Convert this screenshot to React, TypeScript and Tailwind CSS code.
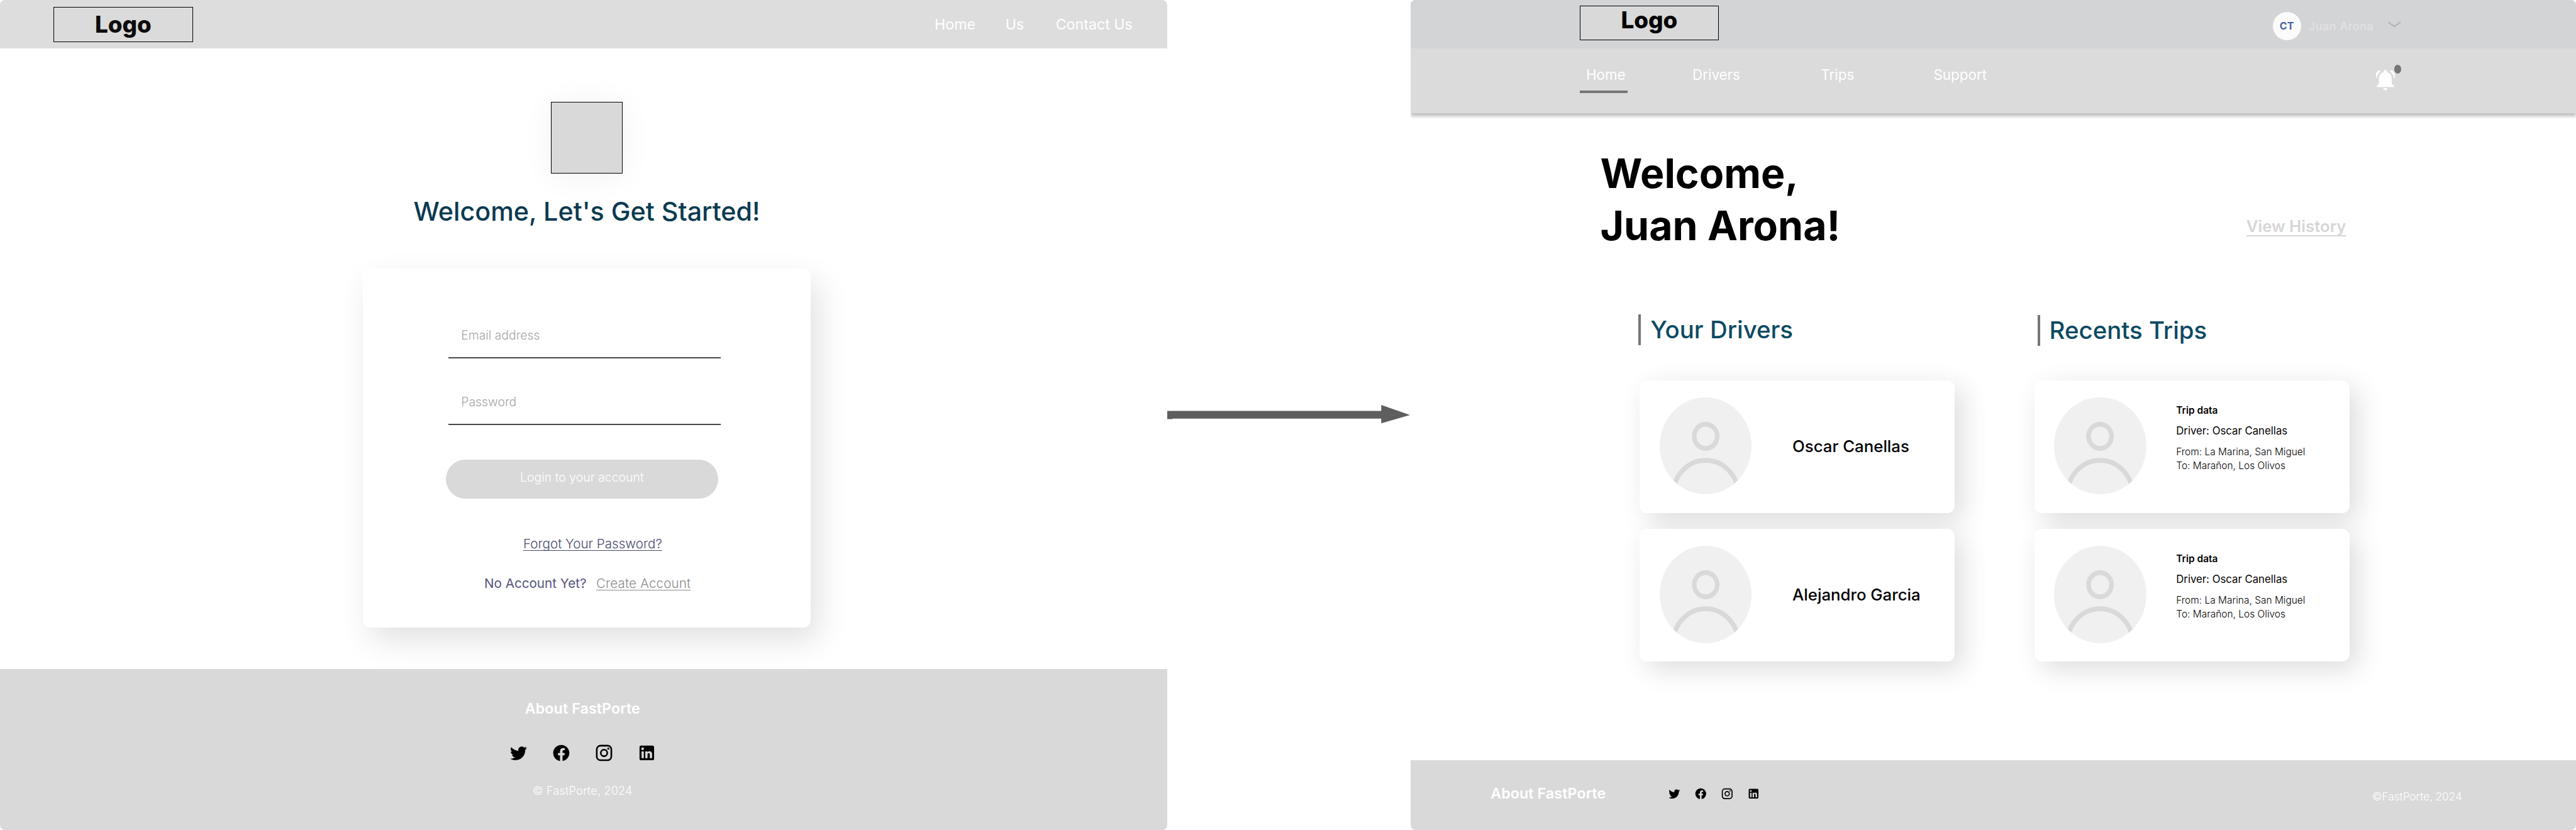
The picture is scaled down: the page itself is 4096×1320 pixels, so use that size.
import React from "react";

const iconPaths = {
  twitter:
    "M22.46 6c-.77.35-1.6.58-2.46.69.88-.53 1.56-1.37 1.88-2.38-.83.5-1.75.85-2.72 1.05C18.37 4.5 17.26 4 16 4c-2.35 0-4.27 1.92-4.27 4.29 0 .34.04.67.11.98C8.28 9.09 5.11 7.38 3 4.79c-.37.63-.58 1.37-.58 2.15 0 1.49.75 2.81 1.91 3.56-.71 0-1.37-.2-1.95-.5v.03c0 2.08 1.48 3.82 3.44 4.21a4.22 4.22 0 0 1-1.93.07 4.28 4.28 0 0 0 4 2.98 8.521 8.521 0 0 1-5.33 1.84c-.34 0-.68-.02-1.02-.06C3.44 20.29 5.7 21 8.12 21 16 21 20.33 14.46 20.33 8.79c0-.19 0-.37-.01-.56.84-.6 1.56-1.36 2.14-2.23z",
  facebook:
    "M12 2.04C6.5 2.04 2 6.53 2 12.06C2 17.06 5.66 21.21 10.44 21.96V14.96H7.9V12.06H10.44V9.85C10.44 7.34 11.93 5.96 14.22 5.96C15.31 5.96 16.45 6.15 16.45 6.15V8.62H15.19C13.95 8.62 13.56 9.39 13.56 10.18V12.06H16.34L15.89 14.96H13.56V21.96A10 10 0 0 0 22 12.06C22 6.53 17.5 2.04 12 2.04Z",
  instagram:
    "M7.8 2h8.4C19.4 2 22 4.6 22 7.8v8.4a5.8 5.8 0 0 1-5.8 5.8H7.8C4.6 22 2 19.4 2 16.2V7.8A5.8 5.8 0 0 1 7.8 2m-.2 2A3.6 3.6 0 0 0 4 7.6v8.8C4 18.39 5.61 20 7.6 20h8.8a3.6 3.6 0 0 0 3.6-3.6V7.6C20 5.61 18.39 4 16.4 4H7.6m9.65 1.5a1.25 1.25 0 0 1 1.25 1.25A1.25 1.25 0 0 1 17.25 8 1.25 1.25 0 0 1 16 6.75a1.25 1.25 0 0 1 1.25-1.25M12 7a5 5 0 0 1 5 5 5 5 0 0 1-5 5 5 5 0 0 1-5-5 5 5 0 0 1 5-5m0 2a3 3 0 0 0-3 3 3 3 0 0 0 3 3 3 3 0 0 0 3-3 3 3 0 0 0-3-3z",
  linkedin:
    "M19 3a2 2 0 0 1 2 2v14a2 2 0 0 1-2 2H5a2 2 0 0 1-2-2V5a2 2 0 0 1 2-2h14m-.5 15.5v-5.3a3.26 3.26 0 0 0-3.26-3.26c-.85 0-1.84.52-2.32 1.3v-1.11h-2.79v8.37h2.79v-4.93c0-.77.62-1.4 1.39-1.4a1.4 1.4 0 0 1 1.4 1.4v4.93h2.79M6.88 8.56a1.68 1.68 0 0 0 1.68-1.68c0-.93-.75-1.69-1.68-1.69a1.69 1.69 0 0 0-1.69 1.69c0 .93.76 1.68 1.69 1.68m1.39 9.94v-8.37H5.5v8.37h2.77z",
};

function SocialIcon({ name, className }: { name: keyof typeof iconPaths; className: string }) {
  return (
    <svg viewBox="0 0 24 24" fill="currentColor" className={className}>
      <path d={iconPaths[name]} />
    </svg>
  );
}

function Avatar() {
  return (
    <svg
      viewBox="0 0 100 100"
      preserveAspectRatio="none"
      className="h-120 w-[146.4px] shrink-0 rounded-[50%] bg-[#f0f0f0]"
      fill="none"
      stroke="#d9d9d9"
      strokeWidth="5"
    >
      <circle cx="50" cy="40" r="12.5" />
      <circle cx="50" cy="100.3" r="35.5" />
    </svg>
  );
}

const cardShadow = "shadow-[12px_12px_44px_rgba(0,0,0,0.14)]";

function DriverCard({ name }: { name: string }) {
  return (
    <article className={`flex h-164 w-389 rounded-[12px] bg-white pl-24.5 pt-21 ${cardShadow}`}>
      <Avatar />
      <h3 className="ml-50.5 mt-49 text-[25.78px] font-medium leading-24 text-black">{name}</h3>
    </article>
  );
}

function TripCard() {
  return (
    <article className={`flex h-164 w-389 rounded-[12px] bg-white pl-24.5 pt-21 ${cardShadow}`}>
      <Avatar />
      <div className="ml-37 mt-8.5 text-black">
        <h3 className="text-[15.47px] font-semibold leading-16">Trip data</h3>
        <p className="mt-9 text-[16.75px] leading-16">Driver: Oscar Canellas</p>
        <p className="mt-9.5 text-[15.47px] font-light leading-17">From: La Marina, San Miguel</p>
        <p className="text-[15.47px] font-light leading-17">To: Marañon, Los Olivos</p>
      </div>
    </article>
  );
}

function LoginScreen() {
  return (
    <section className="flex h-full w-1440 shrink-0 flex-col overflow-hidden rounded-[8px] bg-white">
      <header className="flex h-60 shrink-0 items-center bg-[#dddddd] pl-66">
        <div className="flex h-43.25 w-172 items-center justify-center border-[1.4px] border-black bg-[#dbdbdb]">
          <span className="text-[36.8px] font-extrabold leading-40 text-[#0d0d0d]">Logo</span>
        </div>
        <nav className="ml-915 flex pt-1 text-[23.2px] leading-24 text-white">
          <a className="w-87.5">Home</a>
          <a className="w-62">Us</a>
          <a>Contact Us</a>
        </nav>
      </header>

      <main className="flex flex-col items-center pl-8 pt-65.75">
        <div className="size-88.5 border-[1.4px] border-black bg-[#d9d9d9] shadow-[0_4px_50px_rgba(0,0,0,0.06)]" />
        <h1 className="mt-27 text-[41.24px] font-medium leading-40 text-[#0a3a50]">Welcome, Let's Get Started!</h1>

        <form className="mt-50 flex h-443.5 w-552 flex-col rounded-[12px] bg-white pt-73.25 shadow-[12px_20px_50px_rgba(0,0,0,0.12)]">
          <label className="ml-105 block w-336 border-b-2 border-[#484848] pb-16.5 pl-16 text-[19.33px] font-light leading-20 text-[#a6a6a6]">
            Email address
          </label>
          <label className="ml-105 mt-44 block w-336 border-b-2 border-[#484848] pb-16.5 pl-16 text-[19.33px] font-light leading-20 text-[#a6a6a6]">
            Password
          </label>
          <button
            type="button"
            className="ml-102 mt-42.5 flex h-48 w-336 items-center justify-center rounded-full bg-[#d9d9d9] pb-2.5 text-[19.33px] font-light leading-20 tracking-[0.05px] text-white"
          >
            Login to your account
          </button>
          <a className="ml-197.5 mt-46 w-fit text-[20.62px] font-light leading-20 text-[#4b4b70] underline decoration-[1.3px] underline-offset-[3px] [text-decoration-skip-ink:none]">
            Forgot Your Password?
          </a>
          <p className="ml-149.5 mt-29 flex text-[20.62px] leading-20 text-[#55557a]">
            <span className="w-138">No Account Yet?</span>
            <a className="font-light tracking-[0.12px] text-[#8c8c8c] underline decoration-[1.3px] underline-offset-[3px]">
              Create Account
            </a>
          </p>
        </form>
      </main>

      <footer className="mt-auto flex h-199 shrink-0 flex-col items-center bg-[#d9d9d9] pr-2.5 pt-37.25">
        <h2 className="text-[23.2px] font-semibold leading-24 tracking-[0.12px] text-white">About FastPorte</h2>
        <div className="mt-30.5 flex gap-28.75 text-black">
          <SocialIcon name="twitter" className="size-24" />
          <SocialIcon name="facebook" className="size-24" />
          <SocialIcon name="instagram" className="size-24" />
          <SocialIcon name="linkedin" className="size-24" />
        </div>
        <p className="mt-25 text-[18.04px] font-light leading-20 tracking-[0.2px] text-white">© FastPorte, 2024</p>
      </footer>
    </section>
  );
}

function FlowArrow() {
  return (
    <svg viewBox="0 0 563 60" preserveAspectRatio="none" className="mt-496 h-32 w-300.25 shrink-0" fill="#5e5e5e">
      <path d="M0 21H495V7.3L561.5 30.7L495 50V39H12V40H0Z" />
    </svg>
  );
}

function DashboardScreen() {
  return (
    <section className="flex h-full min-w-0 flex-1 flex-col overflow-hidden rounded-[8px] bg-white">
      <header className="z-10 shrink-0 bg-[#dbdbdb] shadow-[0_5px_5px_rgba(0,0,0,0.25)]">
        <div className="flex h-60 bg-[#d3d4d6] pl-208.5">
          <div className="mt-6.75 flex h-43.25 w-172 items-center justify-center border-[1.4px] border-black bg-[#d9d9d9] pb-7.5">
            <span className="text-[36.8px] font-extrabold leading-32 text-black">Logo</span>
          </div>
          <div className="ml-683 mt-14.75 flex h-35 items-center">
            <div className="flex size-35 items-center justify-center rounded-full bg-[#fbfbfb] text-[16px] font-bold leading-16 text-[#4562a3]">
              CT
            </div>
            <span className="ml-9.5 w-98 pt-1 text-[18.04px] font-medium leading-20 tracking-[0.5px] text-[#e2e2e2]">Juan Arona</span>
            <svg viewBox="0 0 16 8" className="mb-4 h-8 w-16" fill="none" stroke="#b5b5b5" strokeWidth="1.8">
              <path d="M0.5 1L8 6.3L15.5 1" />
            </svg>
          </div>
        </div>
        <div className="flex h-80 items-start pl-208.5 text-[22.4px] leading-24 text-white">
          <nav className="flex pt-20.75">
            <a className="h-34 w-59.25 border-b-[4px] border-[#757575] pl-8">Home</a>
            <a className="ml-80 w-158.5">Drivers</a>
            <a className="w-139">Trips</a>
            <a className="w-80">Support</a>
          </nav>
          <div className="relative ml-466 mt-26.25">
            <svg viewBox="3.33 2.5 17.34 19.5" preserveAspectRatio="none" className="h-25.25 w-23" fill="currentColor">
              <path d="M7.58 4.08 6.15 2.65C3.75 4.48 2.17 7.3 2.03 10.5h2c.15-2.65 1.51-4.97 3.55-6.42zm12.39 6.42h2c-.15-3.2-1.73-6.02-4.12-7.85l-1.42 1.43c2.02 1.45 3.39 3.77 3.54 6.42zM18 11c0-3.07-1.64-5.64-4.5-6.32V4c0-.83-.67-1.5-1.5-1.5s-1.5.67-1.5 1.5v.68C7.63 5.36 6 7.92 6 11v5l-2 2v1h16v-1l-2-2v-5zm-6 11c.14 0 .27-.01.4-.04.65-.14 1.18-.58 1.44-1.18.1-.24.15-.5.15-.78h-4c.01 1.1.9 2 2.01 2z" />
            </svg>
            <span className="absolute -top-6 left-22.25 h-10.5 w-9 rounded-[50%] bg-[#757575]" />
          </div>
        </div>
      </header>

      <main className="pt-42.5">
        <div className="flex items-end pl-234">
          <h1 className="w-797 text-[64.4px] font-bold leading-64 text-black">
            Welcome,
            <br />
            Juan Arona!
          </h1>
          <a className="mb-21 text-[25.78px] font-semibold leading-20 text-[#d6d6d6] underline decoration-[1.6px] underline-offset-[5px] [text-decoration-skip-ink:none]">
            View History
          </a>
        </div>
        <div className="mt-77.25 flex pl-282.5">
          <section className="w-487">
            <h2 className="-ml-1.5 flex h-38 items-center border-l-[4px] border-[#757575] pl-11.75 text-[38.4px] font-medium leading-38 text-[#0c4a63]">
              Your Drivers
            </h2>
            <div className="mt-43.5 flex flex-col gap-19.25">
              <DriverCard name="Oscar Canellas" />
              <DriverCard name="Alejandro Garcia" />
            </div>
          </section>
          <section>
            <h2 className="ml-4.5 mt-1 flex h-38 items-center border-l-[4px] border-[#757575] pl-11 text-[38.4px] font-medium leading-38 text-[#0c4a63]">
              Recents Trips
            </h2>
            <div className="mt-42.5 flex flex-col gap-19.25">
              <TripCard />
              <TripCard />
            </div>
          </section>
        </div>
      </main>

      <footer className="mt-auto flex h-86 shrink-0 items-center bg-[#d9d9d9] pb-3 pl-98.75 text-white">
        <h2 className="w-219 text-[23.2px] font-semibold leading-24 tracking-[0.12px]">About FastPorte</h2>
        <div className="flex gap-16.5 text-black">
          <SocialIcon name="twitter" className="size-16" />
          <SocialIcon name="facebook" className="size-16" />
          <SocialIcon name="instagram" className="size-16" />
          <SocialIcon name="linkedin" className="size-16" />
        </div>
        <p className="ml-755 pt-6 text-[17.4px] font-light leading-20 tracking-[-0.1px]">©FastPorte, 2024</p>
      </footer>
    </section>
  );
}

export default function App() {
  return (
    <div className="flex h-[1320px] w-[4096px] items-start overflow-hidden whitespace-nowrap bg-white font-[Inter,'Liberation_Sans',sans-serif] [--spacing:1.28883px]">
      <LoginScreen />
      <FlowArrow />
      <DashboardScreen />
    </div>
  );
}
